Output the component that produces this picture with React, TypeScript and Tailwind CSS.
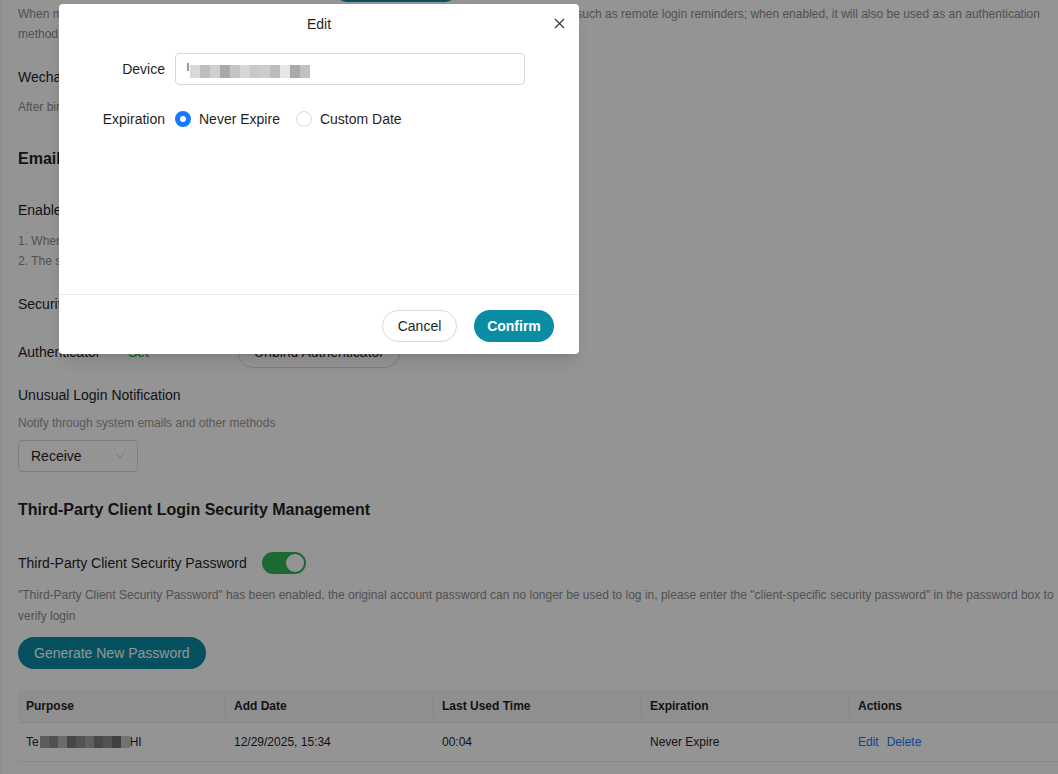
import React from 'react';
import { X, ChevronDown } from 'lucide-react';

// redacted name cells, drawn as a row of grey blocks
const deviceMosaic = [
  'bg-[#d9d9d9]', 'bg-[#bdbdbd]', 'bg-[#cfcfcf]', 'bg-[#a8a8a8]', 'bg-[#c4c4c4]', 'bg-[#d6d6d6]',
  'bg-[#c9c9c9]', 'bg-[#cdcdcd]', 'bg-[#bcbcbc]', 'bg-[#e6e6e6]', 'bg-[#a9a9a9]', 'bg-[#c2c2c2]',
];
const purposeMosaic = [
  'bg-[#a0a0a0]', 'bg-[#8c8c8c]', 'bg-[#b8b8b8]', 'bg-[#7a7a7a]', 'bg-[#909090]', 'bg-[#a6a6a6]',
  'bg-[#7d7d7d]', 'bg-[#8f8f8f]', 'bg-[#6e6e6e]', 'bg-[#c4c4c4]',
];

const columns = ['Purpose', 'Add Date', 'Last Used Time', 'Expiration', 'Actions'];

const Radio: React.FC<{ checked?: boolean; label: string }> = ({ checked, label }) => (
  <label className="flex items-center gap-2 cursor-pointer">
    {checked ? (
      <span className="w-4 h-4 rounded-full bg-[#1677ff] flex items-center justify-center">
        <span className="w-[6px] h-[6px] rounded-full bg-white" />
      </span>
    ) : (
      <span className="w-4 h-4 rounded-full border border-[#d9d9d9] bg-white" />
    )}
    <span className="text-[14px] text-[#1f1f1f]">{label}</span>
  </label>
);

const EditModal: React.FC = () => (
  <div className="absolute left-[59px] top-[4px] w-[520px] h-[350px] bg-white rounded-[4px] flex flex-col shadow-lg">
    {/* header */}
    <div className="relative h-[39px] flex items-center justify-center pt-[1px]">
      <span className="text-[14px] text-[#1f1f1f]">Edit</span>
      <button className="absolute right-[11px] top-[11px] text-[#333]">
        <X size={17} strokeWidth={1.6} />
      </button>
    </div>

    {/* form */}
    <div className="flex-1 pt-[10px]">
      <div className="flex items-center h-[32px]">
        <div className="w-[106px] text-right text-[14px] text-[#1f1f1f]">Device</div>
        <div className="ml-[10px] w-[350px] h-[32px] border border-[#d9d9d9] rounded-[4px] flex items-center pl-[11px]">
          <span className="w-[2px] h-[8px] bg-[#9a9a9a] mr-[1px] self-start mt-[9px]" />
          <div className="flex h-[13px] mt-[4px]">
            {deviceMosaic.map((c, i) => (
              <span key={i} className={`w-[10px] h-full ${c}`} />
            ))}
          </div>
        </div>
      </div>

      <div className="flex items-center h-[32px] mt-[18px]">
        <div className="w-[106px] text-right text-[14px] text-[#1f1f1f]">Expiration</div>
        <div className="ml-[10px] flex items-center gap-4">
          <Radio checked label="Never Expire" />
          <Radio label="Custom Date" />
        </div>
      </div>
    </div>

    {/* footer */}
    <div className="h-[60px] border-t border-[#e8e8e8] flex justify-end items-start pt-[15px] pr-[25px] gap-[17px]">
      <button className="h-[32px] w-[75px] rounded-full border border-[#d9d9d9] text-[14px] text-[#1f1f1f] bg-white">
        Cancel
      </button>
      <button className="h-[32px] w-[80px] rounded-full bg-[#0a8ca4] text-[14px] text-white font-semibold">
        Confirm
      </button>
    </div>
  </div>
);

const SecurityPage: React.FC = () => (
  <div className="ml-[1px] border-l border-[#ececec] pl-[16px] h-full">
    {/* bind button of the row above, scrolled mostly out of view */}
    <div className="h-[2px] overflow-hidden">
      <div className="ml-[314px] -mt-[30px] w-[128px] h-[32px] rounded-full bg-[#0a8ca4]" />
    </div>

    <p className="mt-[2px] text-[12px] leading-[20px] text-[#8c8c8c]">
      When mobile phone binding is enabled, bound mobile phone will be used to receive security notifications such as remote login reminders; when enabled, it will also be used as an authentication method for login verification.
    </p>

    <div className="mt-[22px] text-[14px] leading-[22px] text-[#1f1f1f]">Wechat Binding</div>
    <div className="mt-[9px] text-[12px] leading-[20px] text-[#8c8c8c]">After binding, you can scan the code with Wechat to log in</div>

    <h2 className="mt-[31px] text-[16px] leading-[22px] font-bold text-[#1f1f1f]">Email Login Security</h2>
    <div className="mt-[29px] text-[14px] leading-[22px] text-[#1f1f1f]">Enable Two-Step Verification</div>
    <div className="mt-[10px] text-[12px] leading-[20px] text-[#8c8c8c]">
      <div>1. When enabled, a verification code is required on login</div>
      <div>2. The second step uses the authenticator</div>
    </div>

    <div className="mt-[22px] text-[14px] leading-[22px] text-[#1f1f1f]">Security Verification Method</div>

    <div className="mt-[22px] flex items-center h-[31px]">
      <span className="w-[110px] text-[14px] text-[#1f1f1f]">Authenticator</span>
      <span className="w-[110px] text-[14px] text-[#00a82d]">Set</span>
      <button className="h-[30px] w-[162px] rounded-full border border-[#d9d9d9] text-[14px] text-[#1f1f1f]">
        Unbind Authenticator
      </button>
    </div>

    <div className="mt-[16px] text-[14px] leading-[22px] text-[#1f1f1f]">Unusual Login Notification</div>
    <div className="mt-[7px] text-[12px] leading-[20px] text-[#999]">Notify through system emails and other methods</div>
    <div className="mt-[7px] w-[120px] h-[32px] rounded-[4px] border border-[#d9d9d9] flex items-center justify-between pl-[12px] pr-[10px]">
      <span className="text-[14px] text-[#1f1f1f]">Receive</span>
      <ChevronDown size={14} strokeWidth={1.4} className="text-[#bfbfbf]" />
    </div>

    <h2 className="mt-[27px] text-[16px] leading-[22px] font-bold text-[#1f1f1f]">
      Third-Party Client Login Security Management
    </h2>

    <div className="mt-[31px] flex items-center gap-[15px] h-[22px]">
      <span className="text-[14px] text-[#1f1f1f]">Third-Party Client Security Password</span>
      <span className="w-[44px] h-[22px] rounded-full bg-[#33b657] flex items-center justify-end pr-[2px]">
        <span className="w-[18px] h-[18px] rounded-full bg-white" />
      </span>
    </div>

    <p className="mt-[11px] text-[12px] leading-[21px] text-[#8c8c8c]">
      "Third-Party Client Security Password" has been enabled, the original account password can no longer be used to log in, please enter the "client-specific security password" in the password box to verify login
    </p>

    <button className="mt-[10px] h-[32px] px-[16px] rounded-full bg-[#0a8ca4] text-[14px] text-white">
      Generate New Password
    </button>

    {/* password table */}
    <div className="mt-[21px] w-[1040px]">
      <div className="grid grid-cols-5 h-[33px] bg-[#f7f7f7] border-b border-[#ececec]">
        {columns.map((c, i) => (
          <div key={c} className="relative flex items-center px-[8px] text-[12px] font-bold text-[#1f1f1f]">
            {c}
            {i < columns.length - 1 && (
              <span className="absolute right-0 top-1/2 -translate-y-1/2 w-px h-[22px] bg-[#e6e6e6]" />
            )}
          </div>
        ))}
      </div>
      <div className="grid grid-cols-5 h-[39px] border-b border-[#ececec] text-[12px] text-[#1f1f1f]">
        <div className="flex items-center px-[8px]">
          <span>Te</span>
          <span className="flex h-[12px] ml-[1px]">
            {purposeMosaic.map((c, i) => (
              <span key={i} className={`w-[9px] h-full ${c}`} />
            ))}
          </span>
          <span>HI</span>
        </div>
        <div className="flex items-center px-[8px]">12/29/2025, 15:34</div>
        <div className="flex items-center px-[8px]">00:04</div>
        <div className="flex items-center px-[8px]">Never Expire</div>
        <div className="flex items-center gap-[8px] px-[8px] text-[#1677ff]">
          <span>Edit</span>
          <span>Delete</span>
        </div>
      </div>
    </div>
  </div>
);

export default function App() {
  return (
    <div className="relative w-full h-[774px] overflow-hidden bg-white font-['Liberation_Sans',Arial,sans-serif]">
      <SecurityPage />
      <div className="absolute inset-0 bg-black/[0.42]" />
      <EditModal />
    </div>
  );
}
